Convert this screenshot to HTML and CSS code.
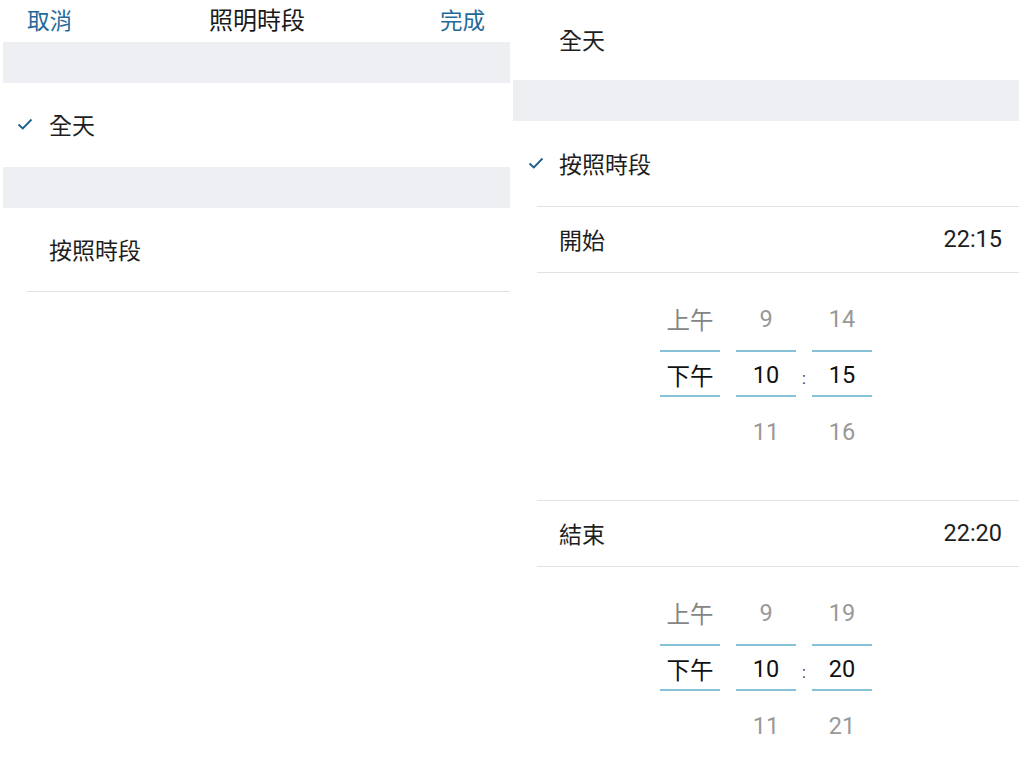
FILE: index.html
```html
<!DOCTYPE html>
<html lang="zh-Hant">
<head>
  <meta charset="UTF-8" />
  <meta name="viewport" content="width=device-width, initial-scale=1.0"/>
  <title>照明時段</title>
  <link rel="stylesheet" href="styles.css">
</head>
<body>

<!-- Left screen: all day selected -->
<div class="screen screen-left">
  <div class="topbar">
    <span class="topbar-btn">取消</span>
    <span class="topbar-title">照明時段</span>
    <span class="topbar-btn">完成</span>
  </div>
  <div class="spacer"></div>
  <div class="option">
    <span class="check"><svg width="16" height="12" viewBox="0 0 16 12"><path d="M1.5 6.5 L5.8 10.5 L14.5 1.5" fill="none" stroke="#1d5f86" stroke-width="1.8"/></svg></span>
    <span>全天</span>
  </div>
  <div class="spacer"></div>
  <div class="option option-last">
    <span class="check"></span>
    <span>按照時段</span>
  </div>
</div>

<!-- Right screen: by period, scrolled down -->
<div class="screen screen-right">
  <div class="option option-top">
    <span class="check"></span>
    <span>全天</span>
  </div>
  <div class="spacer"></div>
  <div class="option option-lined">
    <span class="check"><svg width="16" height="12" viewBox="0 0 16 12"><path d="M1.5 6.5 L5.8 10.5 L14.5 1.5" fill="none" stroke="#1d5f86" stroke-width="1.8"/></svg></span>
    <span>按照時段</span>
  </div>

  <div class="time-row">
    <span>開始</span>
    <span class="time-value">22:15</span>
  </div>
  <div class="picker">
    <div class="wheel">
      <div class="wheel-item">上午</div>
      <div class="wheel-item selected">下午</div>
      <div class="wheel-item"></div>
    </div>
    <div class="wheel num">
      <div class="wheel-item">9</div>
      <div class="wheel-item selected">10</div>
      <div class="wheel-item">11</div>
    </div>
    <div class="colon">:</div>
    <div class="wheel num">
      <div class="wheel-item">14</div>
      <div class="wheel-item selected">15</div>
      <div class="wheel-item">16</div>
    </div>
  </div>

  <div class="time-row">
    <span>結束</span>
    <span class="time-value">22:20</span>
  </div>
  <div class="picker">
    <div class="wheel">
      <div class="wheel-item">上午</div>
      <div class="wheel-item selected">下午</div>
      <div class="wheel-item"></div>
    </div>
    <div class="wheel num">
      <div class="wheel-item">9</div>
      <div class="wheel-item selected">10</div>
      <div class="wheel-item">11</div>
    </div>
    <div class="colon">:</div>
    <div class="wheel num">
      <div class="wheel-item">19</div>
      <div class="wheel-item selected">20</div>
      <div class="wheel-item">21</div>
    </div>
  </div>
</div>

</body>
</html>
```

FILE: styles.css
```css
* {
  box-sizing: border-box;
}
body {
  font-family: Roboto, 'Noto Sans CJK TC', sans-serif;
  background: #fff;
  color: #1e1e1e;
  margin: 0;
  display: flex;
  height: 768px;
  overflow: hidden;
}
.screen {
  background: #fff;
  display: flex;
  flex-direction: column;
}
.screen > * {
  flex-shrink: 0;
}
.screen-left {
  width: 510px;
}
.screen-right {
  width: 506px;
  margin-left: 3px;
}

/* header */
.topbar {
  height: 42px;
  display: flex;
  align-items: center;
  justify-content: space-between;
  padding: 0 25px 5px 27px;
  font-family: 'Noto Sans CJK TC', sans-serif;
}
.topbar-btn {
  color: #1f6a98;
  font-size: 22.5px;
}
.topbar-title {
  font-size: 24px;
  color: #1a1a1a;
  margin-left: 2px;
}

.spacer {
  height: 41px;
  background: #eeeff2;
}
.screen-left .spacer {
  margin-left: 3px;
}

/* options */
.option {
  height: 84px;
  display: flex;
  align-items: center;
  padding-bottom: 2px;
  font-family: 'Noto Sans CJK TC', sans-serif;
  font-size: 23px;
  color: #1e1e1e;
}
.check {
  width: 49px;
  padding-left: 17px;
  display: flex;
  align-items: center;
}
.screen-right .check {
  width: 46px;
  padding-left: 15px;
}
.option-last {
  margin-left: 27px;
  border-bottom: 1px solid #e2e2e2;
}
.option-last .check {
  width: 22px;
  padding: 0;
}
.option-top {
  height: 80px;
}
.option-lined {
  height: 85px;
}

/* time rows */
.time-row {
  height: 67px;
  margin-left: 24px;
  padding: 0 17px 2px 22px;
  display: flex;
  align-items: center;
  justify-content: space-between;
  border-top: 1px solid #e2e2e2;
  border-bottom: 1px solid #e2e2e2;
  font-family: 'Noto Sans CJK TC', sans-serif;
  font-size: 23px;
}
.time-value {
  font-family: Roboto, sans-serif;
  font-size: 23.5px;
  color: #1e1e1e;
}

/* wheel picker */
.picker {
  height: 227px;
  display: flex;
  justify-content: center;
  padding-top: 18px;
}
.wheel {
  width: 60px;
  display: flex;
  flex-direction: column;
  font-family: 'Noto Sans CJK TC', sans-serif;
  font-size: 23.5px;
}
.wheel.num {
  font-family: Roboto, sans-serif;
}
.wheel + .wheel {
  margin-left: 16px;
}
.wheel-item {
  height: 56px;
  display: flex;
  align-items: center;
  justify-content: center;
  color: #858585;
}
.wheel.num .wheel-item {
  color: #999;
}
.wheel .wheel-item.selected {
  height: 47px;
  margin: 3px 0 7px;
  padding-top: 3px;
  color: #111;
  border-top: 2px solid #86c3d6;
  border-bottom: 2px solid #86c3d6;
}
.colon {
  width: 16px;
  height: 56px;
  margin-top: 59px;
  display: flex;
  align-items: center;
  justify-content: center;
  font-family: Roboto, sans-serif;
  font-size: 16px;
  color: #333;
}
```
